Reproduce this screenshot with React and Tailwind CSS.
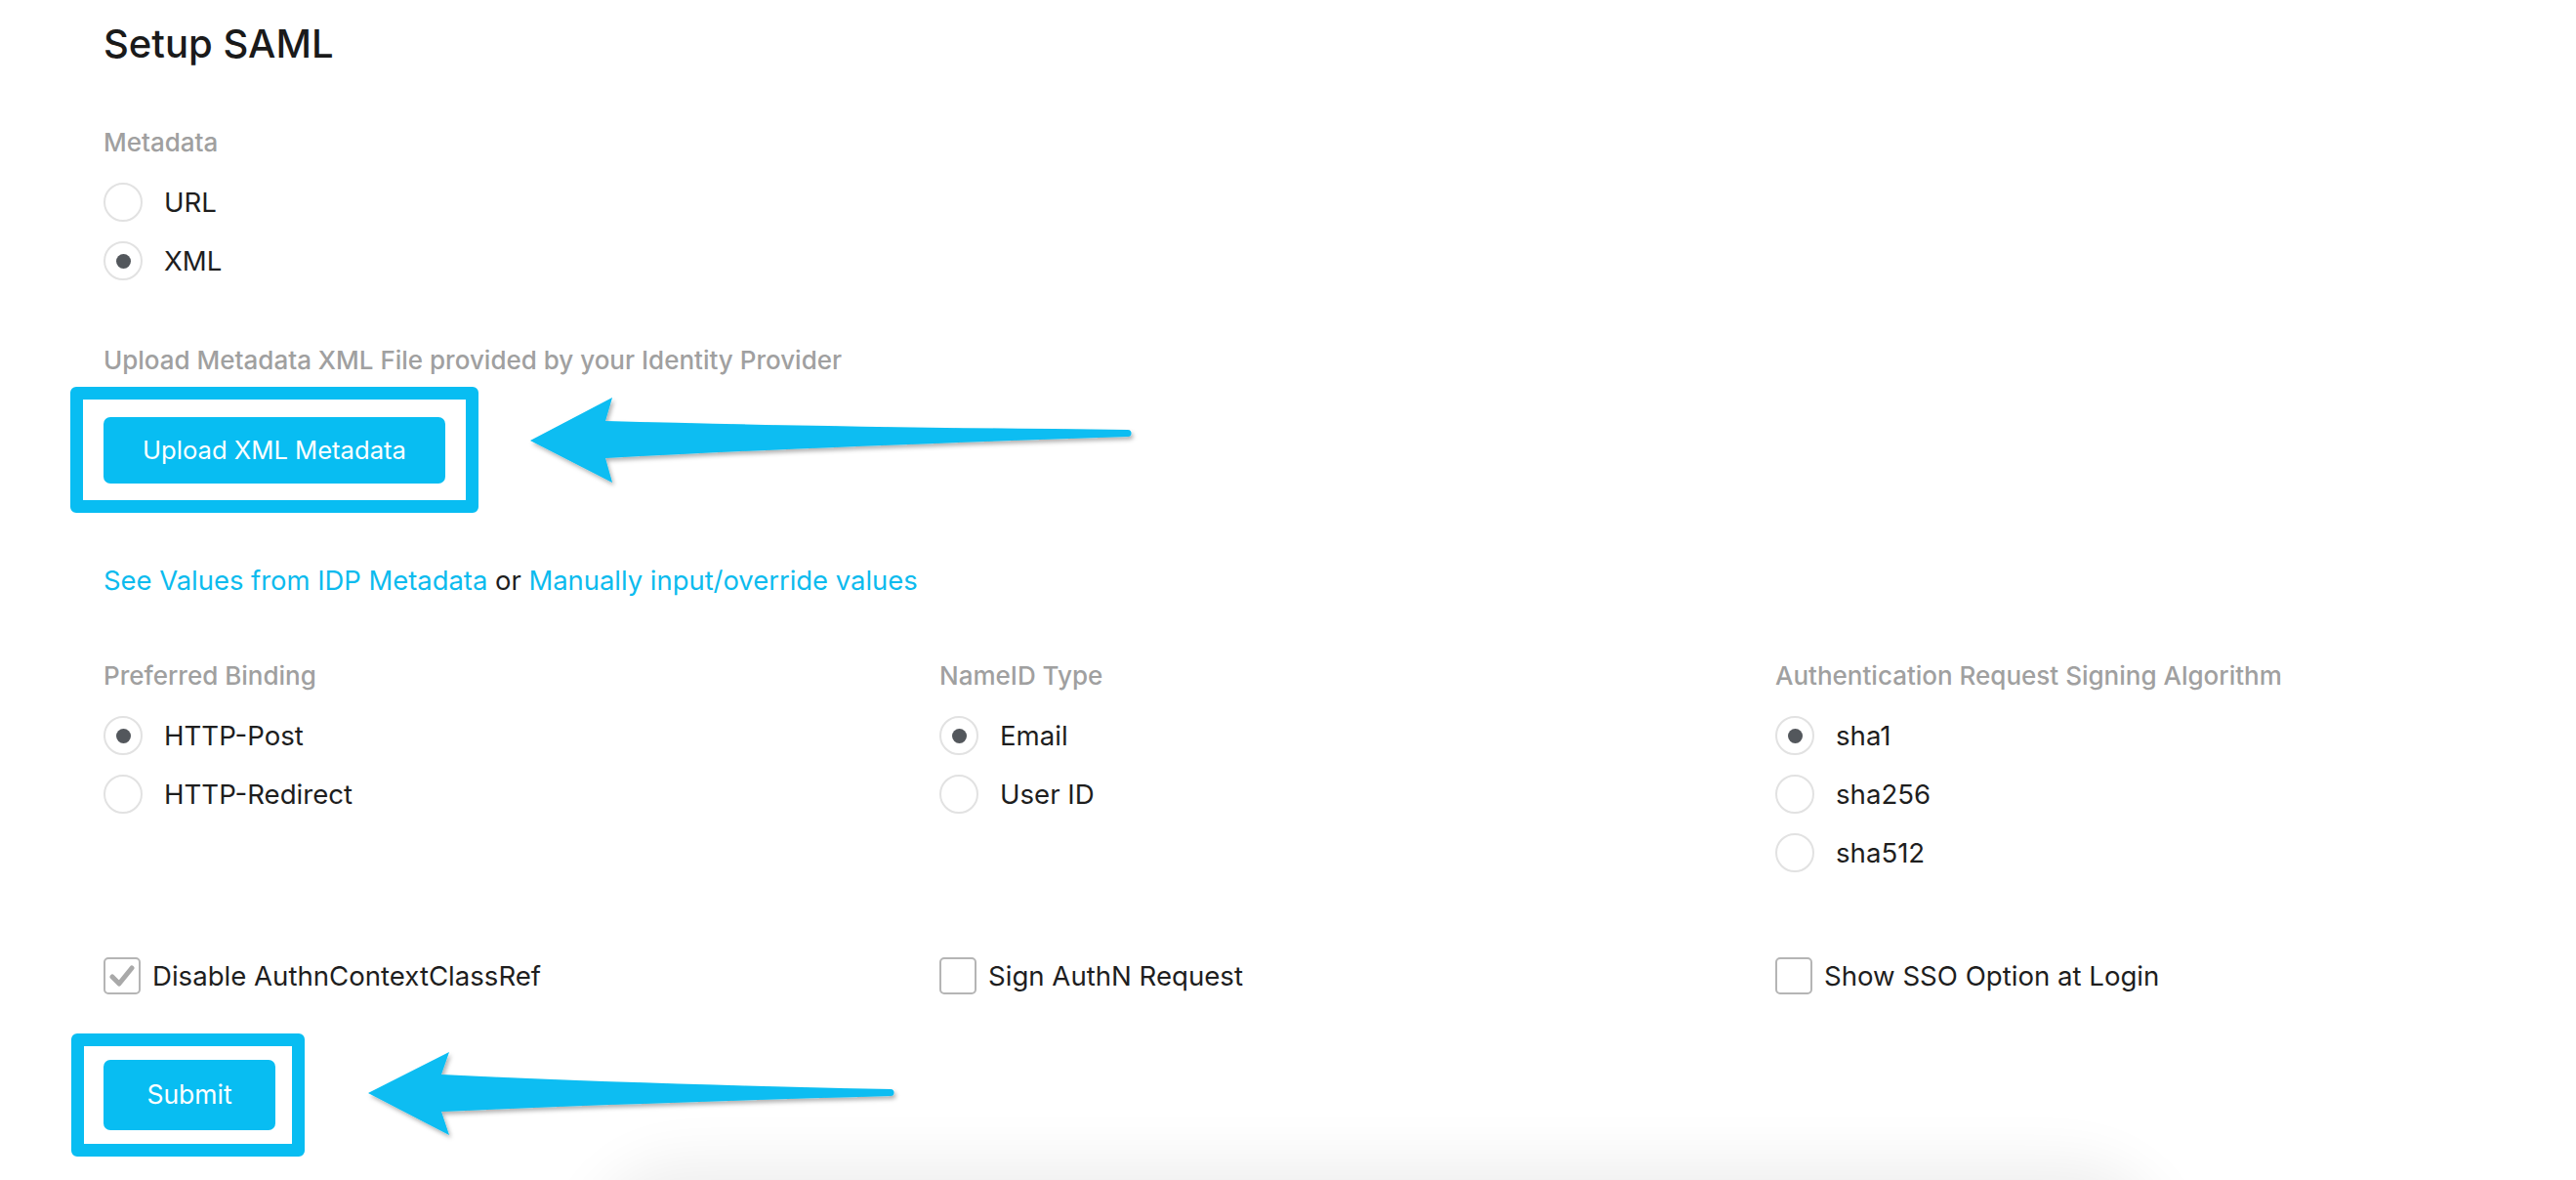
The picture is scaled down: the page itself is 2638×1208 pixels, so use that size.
const cyan = "#08bdf2";

function Radio({ label, checked }) {
  return (
    <div className="flex h-[40px] items-center">
      <span className="flex h-[40px] w-[40px] shrink-0 items-center justify-center rounded-full border-[2px] border-[#e2e2e2] bg-white">
        {checked && <span className="h-[15px] w-[15px] rounded-full bg-[#53575c]" />}
      </span>
      <span className="ml-[22px] text-[27.6px] leading-[40px] text-[#1e1e1e]">{label}</span>
    </div>
  );
}

function RadioGroup({ title, options, selected }) {
  return (
    <div>
      <div className="h-[32px] text-[26px] font-medium leading-[32px] text-[#a0a0a0]">{title}</div>
      <div className="mt-[25px] flex flex-col gap-[20px]">
        {options.map((o) => (
          <Radio key={o} label={o} checked={o === selected} />
        ))}
      </div>
    </div>
  );
}

function Checkbox({ label, checked }) {
  return (
    <div className="flex h-[40px] items-center">
      <span className="flex h-[38px] w-[38px] shrink-0 items-center justify-center rounded-[5px] border-[2px] border-[#b5b5b5] bg-white">
        {checked && (
          <svg width="26" height="22" viewBox="0 0 26 22">
            <path d="M3 12 L10 19 L23 3" fill="none" stroke="#a9a9a9" strokeWidth="5" strokeLinecap="round" strokeLinejoin="round" />
          </svg>
        )}
      </span>
      <span className="ml-[12px] text-[27.6px] leading-[40px] text-[#1e1e1e]">{label}</span>
    </div>
  );
}

function Arrow({ long }) {
  if (long) {
    return (
      <svg width="625" height="102" viewBox="0 0 625 102" className="shrink-0">
        <defs>
          <filter id="sh1" x="-5%" y="-20%" width="110%" height="150%">
            <feDropShadow dx="2" dy="3" stdDeviation="2" floodColor="#000" floodOpacity="0.3" />
          </filter>
        </defs>
        <path
          d="M3 52 L87 8 L80 32 Q300 38 615 41 A3.5 3.5 0 0 1 615 48 Q300 58 80 70 L87 95 Z"
          fill={cyan}
          filter="url(#sh1)"
        />
      </svg>
    );
  }
  return (
    <svg width="550" height="96" viewBox="0 0 550 96" className="shrink-0">
      <defs>
        <filter id="sh2" x="-5%" y="-20%" width="110%" height="150%">
          <feDropShadow dx="2" dy="3" stdDeviation="2" floodColor="#000" floodOpacity="0.3" />
        </filter>
      </defs>
      <path
        d="M3 45 L86 3 L78 26 Q250 35 538 41 A3.5 3.5 0 0 1 538 48 Q250 56 78 64 L86 88 Z"
        fill={cyan}
        filter="url(#sh2)"
      />
    </svg>
  );
}

export default function App() {
  return (
    <div className="relative h-[1208px] w-full overflow-hidden bg-white font-['Inter','Noto_Sans',sans-serif]">
      <div className="pl-[106px] pt-[21px]">
        <h1 className="h-[48px] text-[40px] font-medium leading-[48px] text-[#1a1a1a]">Setup SAML</h1>

        <div className="mt-[61px]">
          <RadioGroup title="Metadata" options={["URL", "XML"]} selected="XML" />
        </div>

        <div className="mt-[66px] h-[32px] text-[26px] font-medium leading-[32px] text-[#a0a0a0]">
          Upload Metadata XML File provided by your Identity Provider
        </div>

        <div className="ml-[-34px] mt-[11px] flex items-start">
          <div className="rounded-[6px] border-[13px] border-[#08bdf2] px-[21px] pb-[17px] pt-[18px]">
            <button className="h-[68px] w-[350px] rounded-[7px] bg-[#08bdf2] text-[25.6px] text-white">
              Upload XML Metadata
            </button>
          </div>
          <div className="ml-[50px] mt-[3px]">
            <Arrow long />
          </div>
        </div>

        <div className="mt-[49px] h-[40px] text-[27.4px] leading-[40px] text-[#1e1e1e]">
          <span className="text-[#0cbbee]">See Values from IDP Metadata</span> or{" "}
          <span className="text-[#0cbbee]">Manually input/override values</span>
        </div>

        <div className="mt-[62px] grid grid-cols-[856px_856px_1fr]">
          <RadioGroup title="Preferred Binding" options={["HTTP-Post", "HTTP-Redirect"]} selected="HTTP-Post" />
          <RadioGroup title="NameID Type" options={["Email", "User ID"]} selected="Email" />
          <RadioGroup
            title="Authentication Request Signing Algorithm"
            options={["sha1", "sha256", "sha512"]}
            selected="sha1"
          />
        </div>

        <div className="mt-[86px] grid grid-cols-[856px_856px_1fr]">
          <Checkbox label="Disable AuthnContextClassRef" checked />
          <Checkbox label="Sign AuthN Request" />
          <Checkbox label="Show SSO Option at Login" />
        </div>

        <div className="ml-[-33px] mt-[39px] flex items-start">
          <div className="rounded-[6px] border-[13px] border-[#08bdf2] pb-[14px] pl-[20px] pr-[17px] pt-[14px]">
            <button className="h-[72px] w-[176px] rounded-[7px] bg-[#08bdf2] text-[26.5px] text-white">Submit</button>
          </div>
          <div className="ml-[62px] mt-[16px]">
            <Arrow />
          </div>
        </div>

        <div className="ml-[514px] mt-[26px] h-[200px] w-[1580px] rounded-[80px] bg-white shadow-[0_0_60px_20px_rgba(0,0,0,0.07)]" />
      </div>
    </div>
  );
}
